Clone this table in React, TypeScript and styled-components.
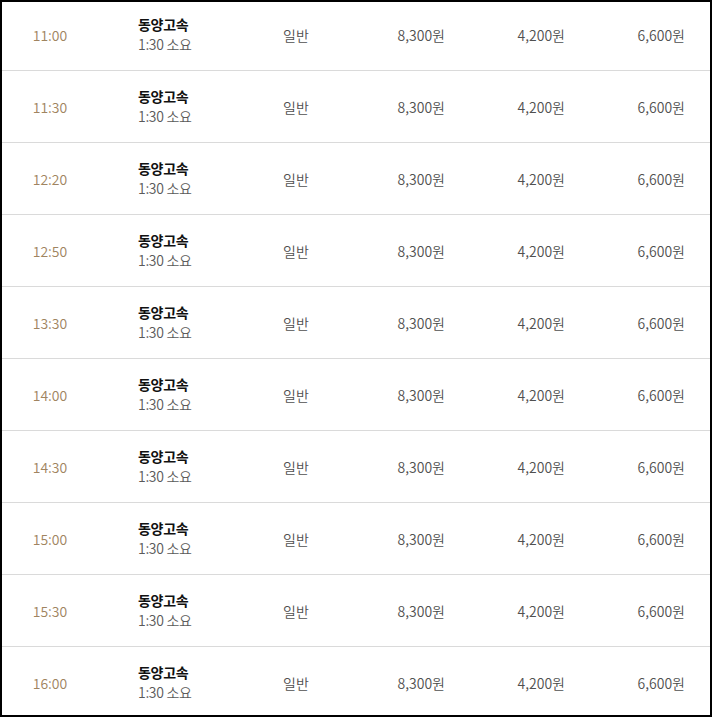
import React from "react";
import styled, { createGlobalStyle } from "styled-components";

const GlobalStyle = createGlobalStyle`
  html, body {
    margin: 0;
    padding: 0;
    background: #fff;
  }
  body {
    font-family: "Noto Sans CJK KR", "Noto Sans", sans-serif;
  }
`;

const Frame = styled.div`
  box-sizing: border-box;
  width: 712px;
  height: 717px;
  border: 2px solid #000;
  overflow: hidden;
  background: #fff;
`;

const Table = styled.div`
  margin-top: -3px;
  display: flex;
  flex-direction: column;
`;

const Row = styled.div`
  box-sizing: border-box;
  height: 72px;
  border-bottom: 1px solid #dadada;
  display: grid;
  grid-template-columns: 96px 144px 108px 120px 120px 120px;
  align-items: center;
  font-size: 14px;
  line-height: 20px;
  letter-spacing: 0;
  font-weight: 350;
`;

const Time = styled.div`
  text-align: center;
  color: #a08460;
`;

const Company = styled.div`
  padding-left: 40px;
  padding-bottom: 2px;
  display: flex;
  flex-direction: column;
`;

const Name = styled.span`
  font-weight: 700;
  color: #111;
  letter-spacing: -0.3px;
`;

const Duration = styled.span`
  color: #5a5a5a;
  letter-spacing: -0.3px;
`;

const Grade = styled.div`
  text-align: center;
  color: #505050;
`;

const Price = styled.div`
  text-align: right;
  padding-right: 25px;
  color: #505050;
`;

const times = ["11:00", "11:30", "12:20", "12:50", "13:30", "14:00", "14:30", "15:00", "15:30", "16:00"];

export default function App() {
  return (
    <>
      <GlobalStyle />
      <Frame>
        <Table>
          {times.map((t) => (
            <Row key={t}>
              <Time>{t}</Time>
              <Company>
                <Name>동양고속</Name>
                <Duration>1:30 소요</Duration>
              </Company>
              <Grade>일반</Grade>
              <Price>8,300원</Price>
              <Price>4,200원</Price>
              <Price>6,600원</Price>
            </Row>
          ))}
        </Table>
      </Frame>
    </>
  );
}
